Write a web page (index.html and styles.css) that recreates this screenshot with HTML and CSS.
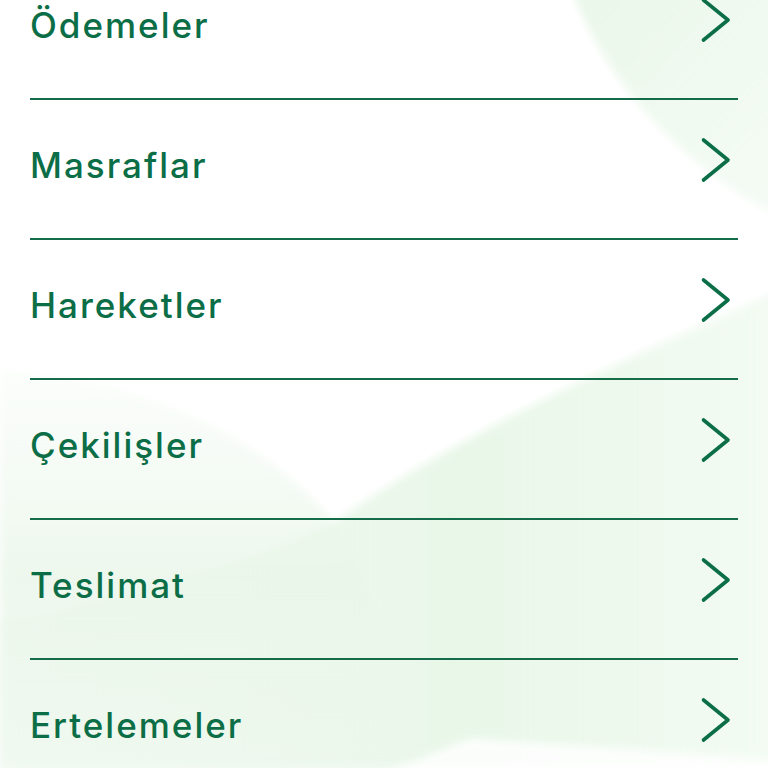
FILE: index.html
```html
<!DOCTYPE html>
<html lang="tr">
<head>
<meta charset="utf-8">
<link rel="stylesheet" href="styles.css">
</head>
<body>
<div class="screen">
  <svg class="bg" width="768" height="768" viewBox="0 0 768 768" aria-hidden="true">
    <defs>
      <linearGradient id="g1" x1="0" y1="0" x2="1" y2="1">
        <stop offset="0" stop-color="#e4f5e4" stop-opacity="0.8"/>
        <stop offset="1" stop-color="#eef9ee" stop-opacity="0.6"/>
      </linearGradient>
      <linearGradient id="g2" x1="0" y1="0" x2="1" y2="0">
        <stop offset="0" stop-color="#e9f6e9" stop-opacity="0.5"/>
        <stop offset="0.6" stop-color="#e6f6e6" stop-opacity="0.9"/>
        <stop offset="1" stop-color="#eef9ee" stop-opacity="0.7"/>
      </linearGradient>
      <linearGradient id="g3" x1="0" y1="0" x2="0" y2="1">
        <stop offset="0" stop-color="#edf8ed" stop-opacity="0.2"/>
        <stop offset="0.5" stop-color="#e9f6e9" stop-opacity="0.8"/>
        <stop offset="1" stop-color="#eef8ee" stop-opacity="0.6"/>
      </linearGradient>
      <filter id="blur" x="-10%" y="-10%" width="120%" height="120%">
        <feGaussianBlur stdDeviation="4"/>
      </filter>
    </defs>
    <path d="M572 -10 C 605 80, 675 160, 780 218 L 780 -10 Z" fill="url(#g1)" filter="url(#blur)"/>
    <path d="M330 525 C 450 440, 600 370, 780 290 L 780 768 L 0 768 L 0 620 C 120 600, 240 570, 330 525 Z" fill="url(#g2)" filter="url(#blur)"/>
    <path d="M0 370 C 140 380, 260 430, 340 530 C 380 600, 400 700, 410 780 L 0 780 Z" fill="url(#g3)" filter="url(#blur)"/>
    <path d="M380 775 L 470 738 L 780 760 L 780 775 Z" fill="#ffffff" opacity="0.85" filter="url(#blur)"/>
  </svg>
  <ul class="menu">
    <li class="item"><span class="label">Ödemeler</span><svg class="chev" viewBox="0 0 32 48" width="32" height="48"><path d="M3.5 4 L28 24 L3.5 44"/></svg></li>
    <li class="item"><span class="label">Masraflar</span><svg class="chev" viewBox="0 0 32 48" width="32" height="48"><path d="M3.5 4 L28 24 L3.5 44"/></svg></li>
    <li class="item"><span class="label">Hareketler</span><svg class="chev" viewBox="0 0 32 48" width="32" height="48"><path d="M3.5 4 L28 24 L3.5 44"/></svg></li>
    <li class="item"><span class="label">Çekilişler</span><svg class="chev" viewBox="0 0 32 48" width="32" height="48"><path d="M3.5 4 L28 24 L3.5 44"/></svg></li>
    <li class="item"><span class="label">Teslimat</span><svg class="chev" viewBox="0 0 32 48" width="32" height="48"><path d="M3.5 4 L28 24 L3.5 44"/></svg></li>
    <li class="item"><span class="label">Ertelemeler</span><svg class="chev" viewBox="0 0 32 48" width="32" height="48"><path d="M3.5 4 L28 24 L3.5 44"/></svg></li>
  </ul>
</div>
</body>
</html>
```
FILE: styles.css
```css
html, body {
  margin: 0;
  padding: 0;
  background: #ffffff;
}
.screen {
  position: relative;
  width: 768px;
  height: 768px;
  overflow: hidden;
  background: #ffffff;
  font-family: Inter, "Noto Sans", sans-serif;
}
.bg {
  position: absolute;
  left: 0;
  top: 0;
  z-index: 0;
}
.menu {
  position: relative;
  z-index: 1;
  list-style: none;
  margin: -40px 0 0 0;
  padding: 0 30px;
}
.item {
  display: flex;
  align-items: center;
  justify-content: space-between;
  height: 120px;
  padding-bottom: 18px;
  border-bottom: 2px solid #156c4b;
}
.label {
  margin-top: 10px;
  font-size: 35px;
  font-weight: 500;
  color: #0b6e47;
  line-height: 1;
  letter-spacing: 2px;
}
.chev {
  margin-right: 6px;
  fill: none;
  stroke: #0b6e47;
  stroke-width: 3.6;
  stroke-linecap: round;
  stroke-linejoin: round;
}
```
